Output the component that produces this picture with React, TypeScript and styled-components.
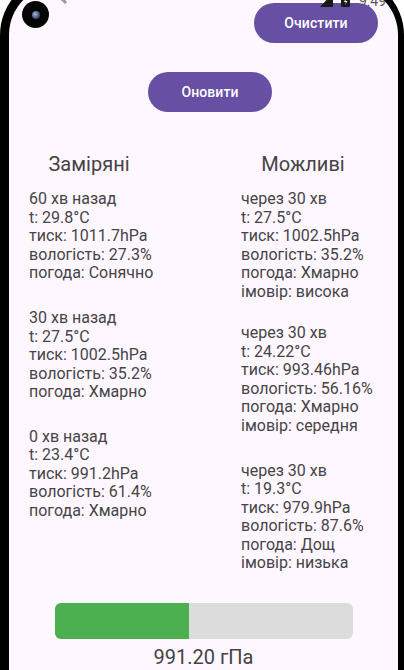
import React from 'react';
import styled, { createGlobalStyle } from 'styled-components';

const GlobalStyle = createGlobalStyle`
  html, body {
    margin: 0;
    padding: 0;
    background: #ffffff;
    overflow: hidden;
  }
  body {
    font-family: Roboto, "Noto Sans", "Liberation Sans", sans-serif;
  }
`;

const Frame = styled.div`
  position: relative;
  width: 404px;
  height: 694px;
  margin-top: -24px;
  box-sizing: border-box;
  padding: 9px 6px 0 9px;
  background: #000;
  border-radius: 59px 59px 0 0;
`;

const Screen = styled.div`
  position: relative;
  height: 100%;
  box-sizing: border-box;
  padding: 18px 0 1px;
  background: #fef7ff;
  border-radius: 50px 50px 0 0;
  display: flex;
  flex-direction: column;
  overflow: hidden;
`;

const Camera = styled.div`
  position: absolute;
  left: 22px;
  top: 25px;
  width: 27px;
  height: 27px;
  border-radius: 50%;
  background: #050505;
  display: flex;
  align-items: center;
  justify-content: center;
  z-index: 3;
  &::after {
    content: '';
    width: 8px;
    height: 8px;
    border-radius: 50%;
    background: radial-gradient(circle at 40% 40%, #a9bdd8 0%, #45577a 55%, #1a1f2a 100%);
  }
`;

const NotifIcons = styled.div`
  position: absolute;
  left: 11px;
  top: 6px;
  width: 50px;
  height: 16px;
  z-index: 2;
`;

const StatusRight = styled.div`
  position: absolute;
  right: 6px;
  top: 8px;
  display: flex;
  align-items: flex-start;
  gap: 8px;
  z-index: 2;
`;

const Time = styled.span`
  font-size: 14px;
  line-height: 16px;
  color: #5a5a5a;
  margin-left: 1px;
  width: 33px;
`;

const TopBar = styled.div`
  display: flex;
  justify-content: flex-end;
  padding-right: 20px;
`;

const PillButton = styled.button`
  width: 124px;
  height: 40px;
  border: none;
  border-radius: 20px;
  background: #6750a4;
  color: #ffffff;
  font-family: Roboto, "Noto Sans", sans-serif;
  font-weight: 500;
  font-size: 14px;
  letter-spacing: 0.1px;
  padding: 0;
  cursor: pointer;
`;

const RefreshRow = styled.div`
  display: flex;
  margin-top: 29px;
  padding-left: 139px;
`;

const Columns = styled.div`
  display: grid;
  grid-template-columns: 120px 124px;
  column-gap: 92px;
  margin-top: 39.5px;
  padding-left: 20px;
`;

const Column = styled.div`
  display: flex;
  flex-direction: column;
`;

const ColumnTitle = styled.div`
  font-size: 20px;
  line-height: 24px;
  color: #444444;
  text-align: center;
  white-space: nowrap;
  margin-bottom: 14.8px;
`;

const Entry = styled.div<{ $space: number }>`
  margin-top: ${(p) => p.$space}px;
  font-size: 16px;
  line-height: 18.5px;
  color: #454545;
  white-space: nowrap;
`;

const Footer = styled.div`
  margin-top: auto;
  display: flex;
  flex-direction: column;
  align-items: center;
`;

const Bar = styled.div`
  width: 298px;
  height: 36px;
  border-radius: 6px;
  background: #dcdcdc;
  overflow: hidden;
  display: flex;
`;

const BarFill = styled.div`
  height: 100%;
  background: #4caf50;
`;

const Value = styled.div`
  margin-top: 6.4px;
  font-size: 20px;
  line-height: 24px;
  color: #444444;
`;

type Measured = { ago: string; t: string; p: string; h: string; w: string; space: number };
type Forecast = { t: string; p: string; h: string; w: string; prob: string; space: number };

const measured: Measured[] = [
  { ago: '60 хв назад', t: '29.8', p: '1011.7', h: '27.3', w: 'Сонячно', space: 0 },
  { ago: '30 хв назад', t: '27.5', p: '1002.5', h: '35.2', w: 'Хмарно', space: 26.5 },
  { ago: '0 хв назад', t: '23.4', p: '991.2', h: '61.4', w: 'Хмарно', space: 25.9 },
];

const forecast: Forecast[] = [
  { t: '27.5', p: '1002.5', h: '35.2', w: 'Хмарно', prob: 'висока', space: 0 },
  { t: '24.22', p: '993.46', h: '56.16', w: 'Хмарно', prob: 'середня', space: 23.2 },
  { t: '19.3', p: '979.9', h: '87.6', w: 'Дощ', prob: 'низька', space: 26.5 },
];

export default function App() {
  const pressure = 991.2;
  const fill = 45.1;
  return (
    <>
      <GlobalStyle />
      <Frame>
        <Camera />
        <Screen>
          <NotifIcons>
            <svg width="50" height="16" viewBox="0 0 50 16">
              <rect x="2" y="0" width="18" height="9" rx="2" fill="#8a8a8a" />
              <path d="M36 2 L46 12" stroke="#9a9a9a" strokeWidth="3" />
              <path d="M44 3 L40 7" stroke="#9a9a9a" strokeWidth="3" />
            </svg>
          </NotifIcons>
          <StatusRight>
            <svg width="13" height="14" viewBox="0 0 13 14">
              <path d="M13 0 L13 14 L0 14 Z" fill="#1a1a1a" />
            </svg>
            <svg width="9" height="14" viewBox="0 0 9 14">
              <rect x="0" y="0" width="9" height="14" rx="1" fill="#1a1a1a" />
              <path d="M5 5 L3 9 L5 9 L4 12 L6.5 8 L4.5 8 Z" fill="#fef7ff" />
            </svg>
            <Time>9:49</Time>
          </StatusRight>

          <TopBar>
            <PillButton>Очистити</PillButton>
          </TopBar>
          <RefreshRow>
            <PillButton>Оновити</PillButton>
          </RefreshRow>

          <Columns>
            <Column>
              <ColumnTitle>Заміряні</ColumnTitle>
              {measured.map((m, i) => (
                <Entry key={i} $space={m.space}>
                  <div>{m.ago}</div>
                  <div>t: {m.t}°C</div>
                  <div>тиск: {m.p}hPa</div>
                  <div>вологість: {m.h}%</div>
                  <div>погода: {m.w}</div>
                </Entry>
              ))}
            </Column>
            <Column>
              <ColumnTitle>Можливі</ColumnTitle>
              {forecast.map((f, i) => (
                <Entry key={i} $space={f.space}>
                  <div>через 30 хв</div>
                  <div>t: {f.t}°C</div>
                  <div>тиск: {f.p}hPa</div>
                  <div>вологість: {f.h}%</div>
                  <div>погода: {f.w}</div>
                  <div>імовір: {f.prob}</div>
                </Entry>
              ))}
            </Column>
          </Columns>

          <Footer>
            <Bar>
              <BarFill style={{ width: `${fill}%` }} />
            </Bar>
            <Value>{pressure.toFixed(2)} гПа</Value>
          </Footer>
        </Screen>
      </Frame>
    </>
  );
}
